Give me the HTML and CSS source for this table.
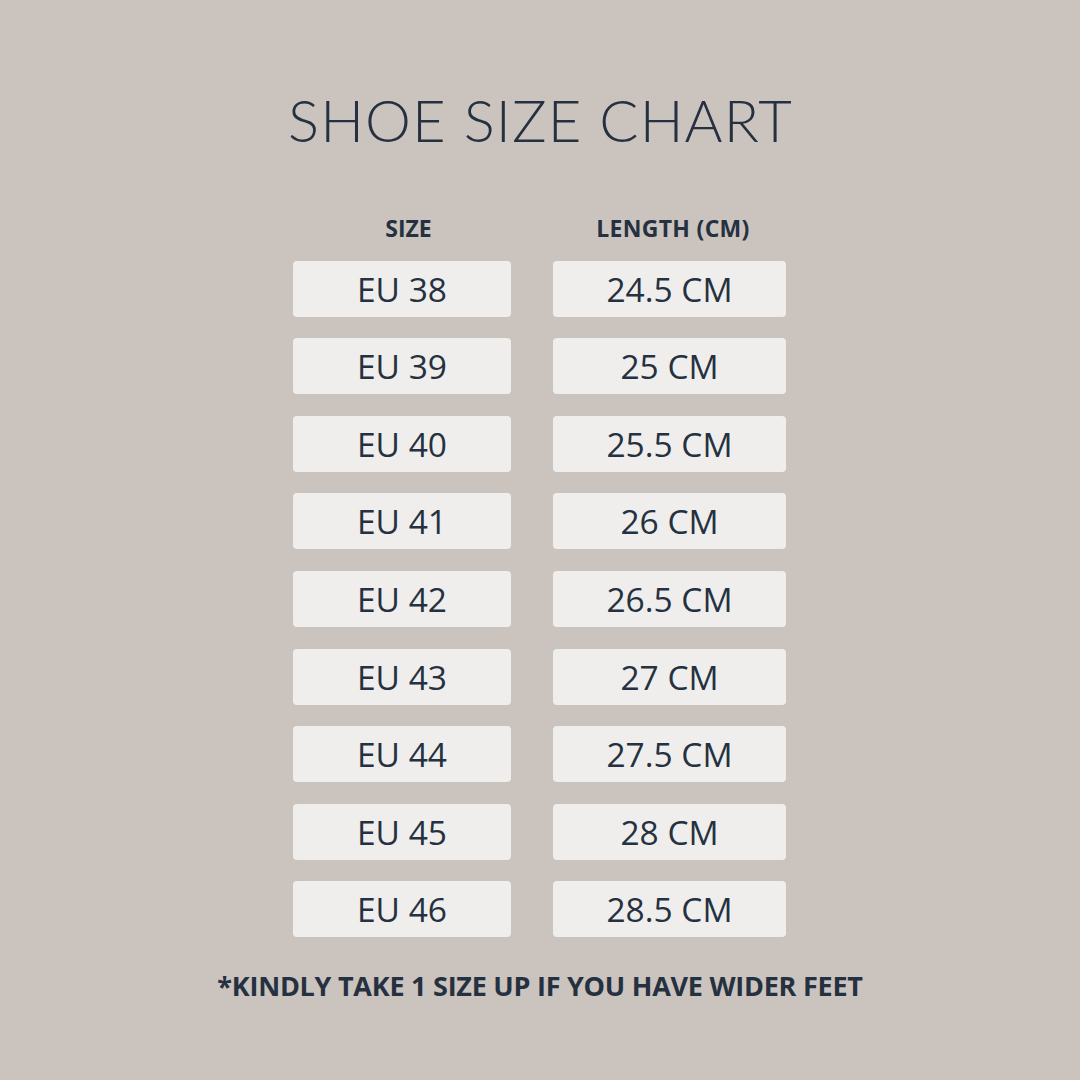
FILE: index.html
```html
<!DOCTYPE html>
<html lang="en">
<head>
<meta charset="utf-8">
<title>Shoe Size Chart</title>
<link rel="stylesheet" href="styles.css">
</head>
<body>
<main class="page">
  <h1 class="title">SHOE SIZE CHART</h1>
  <div class="chart">
    <div class="head">SIZE</div>
    <div class="head head-len">LENGTH (CM)</div>
    <div class="cell">EU 38</div><div class="cell">24.5 CM</div>
    <div class="cell">EU 39</div><div class="cell">25 CM</div>
    <div class="cell">EU 40</div><div class="cell">25.5 CM</div>
    <div class="cell">EU 41</div><div class="cell">26 CM</div>
    <div class="cell">EU 42</div><div class="cell">26.5 CM</div>
    <div class="cell">EU 43</div><div class="cell">27 CM</div>
    <div class="cell">EU 44</div><div class="cell">27.5 CM</div>
    <div class="cell">EU 45</div><div class="cell">28 CM</div>
    <div class="cell">EU 46</div><div class="cell">28.5 CM</div>
  </div>
  <p class="note">*KINDLY TAKE 1 SIZE UP IF YOU HAVE WIDER FEET</p>
</main>
</body>
</html>
```

FILE: styles.css
```css
html, body {
  margin: 0;
  padding: 0;
}
body {
  width: 1080px;
  height: 1080px;
  background: #cbc3bd;
  color: #253140;
  font-family: "Open Sans", "Noto Sans", sans-serif;
  overflow: hidden;
}
.page {
  display: flex;
  flex-direction: column;
  align-items: center;
  padding-top: 85px;
}
.title {
  margin: 0;
  font-family: Lato, "Open Sans", sans-serif;
  font-weight: 300;
  font-size: 58px;
  line-height: 70px;
  letter-spacing: 1.1px;
  padding-left: 1px;
}
.chart {
  margin-top: 63px;
  display: grid;
  grid-template-columns: 218px 233px;
  grid-template-rows: 21px;
  grid-auto-rows: 56px;
  column-gap: 42px;
  row-gap: 21.6px;
  margin-left: -1px;
}
.head {
  font-weight: 700;
  font-size: 23px;
  line-height: 21px;
  text-align: center;
  padding-left: 13px;
}
.head-len {
  padding-left: 7px;
  letter-spacing: 0.3px;
}
.cell {
  background: #efeeec;
  border-radius: 4px;
  font-size: 33.5px;
  line-height: 56px;
  text-align: center;
}
.note {
  margin: 24px 0 0;
  font-weight: 700;
  font-size: 27px;
  line-height: 50px;
  letter-spacing: -0.25px;
}
```
